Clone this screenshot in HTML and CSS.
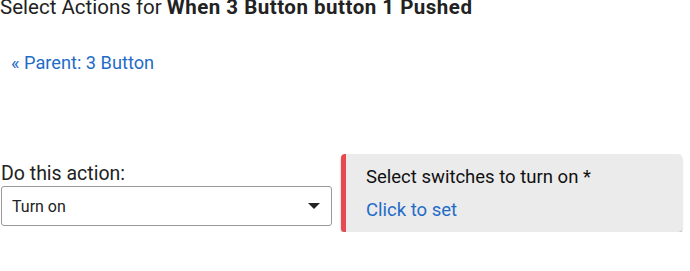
FILE: index.html
```html
<!DOCTYPE html>
<html>
<head>
<meta charset="utf-8">
<link rel="stylesheet" href="styles.css">
</head>
<body>
<div class="page">
  <h2 class="title">Select Actions for <b>When 3 Button button 1 Pushed</b></h2>
  <a class="parent" href="#">« Parent: 3 Button</a>
  <div class="row">
    <div class="field">
      <label class="label">Do this action:</label>
      <div class="select">
        <span>Turn on</span>
        <span class="caret"></span>
      </div>
    </div>
    <div class="card">
      <div class="card-title">Select switches to turn on *</div>
      <a class="card-link" href="#">Click to set</a>
    </div>
  </div>
</div>
</body>
</html>
```
FILE: styles.css
```css
html, body {
  margin: 0;
  padding: 0;
  background: #fff;
}
.page {
  font-family: Roboto, "Liberation Sans", sans-serif;
  color: #222;
}
.title {
  margin: -5px 0 0 0;
  font-size: 20.5px;
  font-weight: 400;
  line-height: 24px;
  color: #222;
  white-space: nowrap;
}
.title b {
  font-weight: 700;
  letter-spacing: 0.5px;
}
.parent {
  display: block;
  margin: 33px 0 0 11px;
  font-size: 18.2px;
  line-height: 22px;
  color: #1f6cc7;
  text-decoration: none;
}
.row {
  display: flex;
  align-items: flex-start;
  margin-top: 80px;
  padding-left: 1px;
}
.field {
  width: 331px;
  padding-top: 8px;
}
.label {
  display: block;
  font-size: 19.5px;
  line-height: 23px;
  color: #222;
}
.select {
  margin-top: 1px;
  box-sizing: border-box;
  height: 40px;
  border: 1px solid #999;
  border-radius: 3px;
  display: flex;
  align-items: center;
  justify-content: space-between;
  padding: 0 11px 0 10px;
  font-size: 16px;
  color: #222;
}
.caret {
  width: 0;
  height: 0;
  border-left: 6px solid transparent;
  border-right: 6px solid transparent;
  border-top: 6px solid #222;
}
.card {
  margin-left: 9px;
  width: 341px;
  box-sizing: border-box;
  height: 78px;
  background: #ebebeb;
  border-left: 5px solid #e84850;
  border-radius: 4px;
  box-shadow: 0 2px 2px rgba(0,0,0,0.3);
  padding: 12px 0 0 20px;
}
.card-title {
  font-size: 18.5px;
  line-height: 22px;
  color: #111;
}
.card-link {
  display: block;
  margin-top: 11px;
  font-size: 18.5px;
  line-height: 22px;
  color: #1f6cc7;
  text-decoration: none;
}
```
